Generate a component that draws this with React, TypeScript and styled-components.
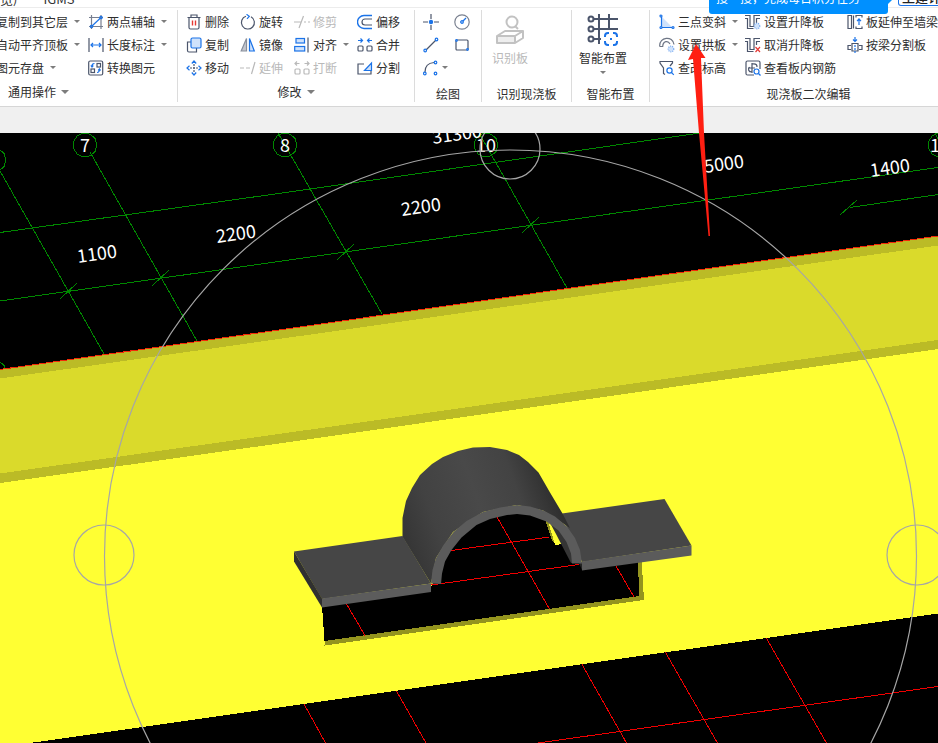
import React from 'react';
import styled, { createGlobalStyle } from 'styled-components';

const INK = '#4b556b';
const BLUE = '#1b73e8';
const MUTED = '#b9b9b9';
const PALE = '#cfe2fb';

const GlobalStyle = createGlobalStyle`
  * { box-sizing: border-box; }
  body {
    margin: 0;
    overflow: hidden;
    color: #2e2e2e;
    font: 12px/16px "Noto Sans CJK SC", sans-serif;
  }
`;

const Page = styled.div`
  position: relative;
  display: flex;
  flex-direction: column;
  height: 100vh;
  overflow: hidden;
  background: #f0f0f0;
`;

const TabStrip = styled.nav`
  display: flex;
  align-items: flex-end;
  gap: 26px;
  height: 8px;
  flex: none;
  overflow: hidden;
  background: #fff;
  border-bottom: 1px solid #ececec;
`;

const Tab = styled.a`
  color: #333;
  font-size: 13px;
  line-height: 16px;
  text-decoration: none;
  white-space: nowrap;
`;

const Ribbon = styled.header`
  display: flex;
  height: 99px;
  flex: none;
  margin-left: -100px;
  background: #fff;
  border-bottom: 1px solid #d6d6d6;
`;

const Group = styled.section<{ $width: number; $fill?: boolean }>`
  display: flex;
  flex-direction: column;
  flex: ${(p) => (p.$fill ? '1 0' : '0 0')} ${(p) => p.$width}px;
  margin: 2px 0 4px;
  border-right: 1px solid #dcdcdc;
`;

const ToolGrid = styled.div<{ $columns: string; $inset: number }>`
  display: grid;
  grid-template-columns: ${(p) => p.$columns};
  grid-auto-rows: 23px;
  flex: none;
  height: 69px;
  padding-left: ${(p) => p.$inset}px;
`;

const ToolStack = styled.div<{ $inset: number }>`
  display: flex;
  align-items: flex-start;
  flex: none;
  height: 69px;
  padding-left: ${(p) => p.$inset}px;
`;

const ToolButton = styled.button<{ $stacked?: boolean }>`
  display: flex;
  flex-direction: ${(p) => (p.$stacked ? 'column' : 'row')};
  align-items: center;
  justify-self: start;
  gap: ${(p) => (p.$stacked ? 2 : 3)}px;
  padding: ${(p) => (p.$stacked ? '3px 0 0' : '0')};
  border: 0;
  background: none;
  color: inherit;
  font: inherit;
  white-space: nowrap;

  &:disabled { color: ${MUTED}; }
  svg { flex: none; display: block; }
`;

const Caret = styled.span<{ $large?: boolean; $spaced?: boolean }>`
  width: 0;
  height: 0;
  margin-left: ${(p) => (p.$spaced ? 3 : 0)}px;
  border: ${(p) => (p.$large ? 4 : 3)}px solid transparent;
  border-top-color: #7d7d7d;
  border-bottom: 0;
`;

const StackedCaret = styled(Caret)`
  margin-top: 3px;
`;

const GroupLabel = styled.div<{ $tall?: boolean }>`
  display: flex;
  align-items: center;
  justify-content: center;
  gap: 5px;
  padding-top: ${(p) => (p.$tall ? 7 : 5)}px;
  line-height: 16px;
  white-space: nowrap;
`;

const Viewport = styled.main`
  flex: 1;
  min-height: 0;
  margin-top: 26px;
  background: #000;
  svg { display: block; width: 100%; height: 100%; }
`;

const Tip = styled.aside`
  position: absolute;
  top: 0;
  left: 709px;
  display: flex;
  align-items: flex-end;
  width: 179px;
  height: 14px;
  padding: 0 7px 8px;
  border-radius: 0 0 3px 3px;
  background: #0090ff;
  color: #fff;
  white-space: nowrap;

  &::after {
    content: '';
    position: absolute;
    left: 100%;
    top: 0;
    border-top: 4px solid #0090ff;
    border-right: 4px solid transparent;
  }
`;

const ProductButton = styled.button`
  position: absolute;
  top: 0;
  left: 898px;
  display: flex;
  align-items: flex-end;
  height: 6px;
  padding: 0 3px;
  border: 1px solid ${BLUE};
  border-top: 0;
  border-radius: 0 0 3px 3px;
  background: #fff;
  color: #222;
  font: inherit;
  font-size: 13px;
  font-weight: 500;
  line-height: 16px;
  overflow: hidden;
  white-space: nowrap;
`;

const Pointer = styled.svg`
  position: absolute;
  top: 44px;
  left: 687px;
  pointer-events: none;
`;

const icons: Record<string, React.ReactNode> = {
  axis: <><path d="M3.500 1v14M13 1v14M1 3.500h14M1 12.500h14" stroke="#777f90" /><path d="M4 12 12.500 4" stroke={BLUE} /><circle cx="3.500" cy="12.500" r="1.200" stroke={BLUE} /><circle cx="13" cy="3.500" r="1.200" stroke={BLUE} /></>,
  length: <><path d="M1 1v14M15 1v14" /><path d="M3 8h10M5 6 3 8l2 2M11 6l2 2-2 2" stroke={BLUE} /></>,
  convert: <><rect x=".7" y="1" width="14" height="14" rx="1.500" /><rect x="9" y="3.500" width="3.500" height="3.500" /><rect x="3" y="9" width="3.500" height="3.500" /><path d="M6.500 3.500C4 3.500 4 5 4 7M2.800 5.500 4 7l1.300-1.500M9 12.500c2.500 0 2.500-1.500 2.500-3.500M10.200 10.500 11.500 9l1.200 1.500" stroke={BLUE} /></>,
  remove: <><path d="M1.500 3.500h13M5 3V1h6v2M3 4v9.500q0 1.500 1.500 1.500h7q1.500 0 1.500-1.500V4" /><path d="M6.500 6.500v5M9.500 6.500v5" stroke="#e53935" strokeWidth="1.400" /></>,
  copy: <><path d="M5 5H1.500v8.500q0 1.500 1.500 1.500h7.500v-4" /><rect x="5" y="1" width="10" height="10" rx="1.500" fill={PALE} stroke={BLUE} /></>,
  move: <><path d="M8 4v8M4 8h8" strokeDasharray="2 1" /><path d="M5.800 3.500 8 1l2.200 2.500M5.800 12.500 8 15l2.200-2.500M3.500 5.800 1 8l2.500 2.200M12.500 5.800 15 8l-2.500 2.200" stroke={BLUE} /></>,
  rotate: <><path d="M6 2.300a6.500 6.500 0 1 0 5 .5" /><path d="M6.500.3 9.300 2.300 7 4.800" stroke={BLUE} /></>,
  mirror: <><path d="M6.500 1.500V14H1.200Z" fill="#c4c7ce" stroke="#888f9c" /><path d="M9.500 1.500V14h4.800Z" fill={PALE} stroke={BLUE} /></>,
  extend: <path d="M0 8h4M6 8h4M15 2l-3.500 12" stroke={MUTED} />,
  trim: <path d="M0 8h7M9.500 2 5 14M10 8h2M14 8h2" stroke={MUTED} />,
  align: <><rect x="2" y="1.500" width="8.500" height="4.500" fill={PALE} stroke={BLUE} /><rect x=".7" y="9.500" width="10" height="4.500" fill={PALE} stroke={BLUE} /><path d="M14 .5v15" /></>,
  break: <g stroke={MUTED}><rect x="1" y="9" width="5" height="5" rx="1" /><rect x="10" y="9" width="5" height="5" rx="1" /><path d="M5.500 3.500H1M3 1.500l-2 2 2 2M10.500 3.500H15M13 1.500l2 2-2 2" /></g>,
  offset: <><path d="M15 1.500H7a6.500 6.500 0 0 0 0 13h8" stroke={BLUE} strokeWidth="1.400" /><path d="M15 5H8a3 3 0 0 0 0 6h7" /></>,
  merge: <><rect x="1" y="9" width="5" height="5" rx="1" /><rect x="10" y="9" width="5" height="5" rx="1" /><path d="M1 3.500h4M3.500 1.500l2 2-2 2M15 3.500h-4M12.500 1.500l-2 2 2 2" stroke={BLUE} /></>,
  split: <><path d="M7 4H1v10h13v-3" /><path d="M7.500 10.500 14.500 3v7.500Z" fill={PALE} stroke={BLUE} /></>,
  point: <><path d="M8 0v5M8 11v5M0 8h5M11 8h5" /><circle cx="8" cy="8" r="2.200" fill={BLUE} stroke="none" /></>,
  circle: <><circle cx="8" cy="8" r="7.200" stroke="#7a8190" /><path d="M8 8 12 4" stroke={BLUE} /><circle cx="8" cy="8" r="1.300" fill={PALE} stroke={BLUE} /></>,
  line: <><path d="m3 13 10-10" /><circle cx="2.200" cy="13.500" r="1.300" stroke={BLUE} /><circle cx="13.500" cy="2.500" r="1.300" stroke={BLUE} /></>,
  rect: <><rect x="2" y="3" width="12" height="10" rx="1" /><circle cx="2.500" cy="3.500" r=".8" stroke={BLUE} fill="#fff" /><circle cx="13.500" cy="12.500" r=".8" stroke={BLUE} fill="#fff" /></>,
  arc: <><path d="M2 12C2 7 5 3 11 2.500" /><g stroke={BLUE}><circle cx="1.800" cy="13.500" r="1.300" /><circle cx="12.500" cy="2.500" r="1.300" /><circle cx="12.500" cy="13.500" r="1.300" /></g></>,
  slope: <><path d="M3 3v10h10Z" fill={PALE} stroke="none" /><path d="M2.500 3v10M3 13.500h10" stroke={BLUE} /><g stroke={BLUE} fill="#fff"><circle cx="2" cy="2" r="1" /><circle cx="2" cy="13.500" r="1" /><circle cx="14" cy="13.500" r="1" /></g></>,
  arch: <><path d="M.7 9.500C0-.5 14-1.500 15 7.500M.7 9.500h3C4 4 9 3 11 7" stroke="#6e7686" /><circle cx="12" cy="12" r="2.800" fill={PALE} stroke="#78aaf0" strokeDasharray="1 1" /></>,
  elevation: <><path d="M6 14.500 4.500 13.500V8L1 3V1.500h12.500V3L11 6" /><circle cx="10.500" cy="10.500" r="2.600" stroke={BLUE} /><path d="m12.500 12.500 2.300 2.300" stroke={BLUE} /></>,
  step: <><path d="M0 1.500h5v11h4v-11h6M0 4.500h2.500v10h6M11.500 9V4.500H15" /><circle cx="12" cy="12" r="2.800" fill={PALE} stroke="#78aaf0" strokeDasharray="1 1" /></>,
  stepOff: <><path d="M0 1.500h5v11h4v-11h6M0 4.500h2.500v10h6M11.500 8V4.500H15" /><path d="m10.500 10 4.500 5M15 10l-4.500 5" stroke="#e53935" /></>,
  rebar: <><path d="M9 15H2.500Q1 15 1 13.500v-11Q1 1 2.500 1h11Q15 1 15 2.500V9M7 3v10M3 8h7M7 4c5-1 5 2 5 3M7 12c-4 0-4-3-2.500-5" /><circle cx="11.500" cy="11.500" r="2.500" stroke={BLUE} fill="#fff" /><path d="m13.500 13.500 2 2" stroke={BLUE} /></>,
  wall: <><path d="M1 1.500h3.500v13H1ZM6.500 1.500v13M9 3.500v-2h6v2M9 12.500v2h6v-2" /><path d="M12 5v6M10 7.200l2-2.200 2 2.200" stroke={BLUE} /></>,
  beam: <><path d="M5 6.500h6v7.500H5ZM4 8.500H1v4h3M12 8.500h3v4h-3" /><path d="M8 8v8" strokeDasharray="2 1" stroke={BLUE} /><path d="M8 0v4M6 2.500l2 2 2-2" stroke={BLUE} /></>,
};

const Icon = ({ name }: { name: string }) => (
  <svg width="16" height="16" viewBox="0 0 16 16" fill="none" stroke={INK} strokeWidth="1.200" aria-hidden="true">
    {icons[name]}
  </svg>
);

type ToolProps = { icon?: string; label?: string; name?: string; menu?: boolean; disabled?: boolean };

const Tool = ({ icon, label, name, menu, disabled }: ToolProps) => (
  <ToolButton disabled={disabled} aria-label={name}>
    {icon && <Icon name={icon} />}
    {label}
    {menu && <Caret $spaced={!!label} />}
  </ToolButton>
);

const green = '#008800';

const AxisBubble = ({ x, y, label }: { x: number; y: number; label?: string }) => (
  <>
    <polygon
      points={[0, 1, 2, 3, 4, 5, 6, 7, 8, 9, 10]
        .map((i) => `${x + 12 * Math.cos((i * Math.PI * 2) / 11)},${y + 12 * Math.sin((i * Math.PI * 2) / 11)}`)
        .join(' ')}
      fill="none"
      stroke={green}
      shapeRendering="crispEdges"
    />
    {label && <text x={x} y={y + 7} textAnchor="middle">{label}</text>}
  </>
);

const dimensions = [
  { x: 78, y: 263, value: '1100' },
  { x: 217, y: 243, value: '2200' },
  { x: 402, y: 216, value: '2200' },
  { x: 433, y: 144, value: '31300' },
  { x: 705, y: 173, value: '5000' },
  { x: 871, y: 177, value: '1400' },
];

const ticks = [[69, 291], [161, 278], [346, 252], [531, 225]];

const Scene = () => (
  <svg viewBox="0 133 938 610" preserveAspectRatio="xMinYMin slice" role="img" aria-label="现浇板三维视图">
    <defs>
      <linearGradient id="barrel" gradientUnits="userSpaceOnUse" x1="408" y1="545" x2="560" y2="490">
        <stop offset="0" stopColor="#363636" />
        <stop offset=".2" stopColor="#424242" />
        <stop offset=".5" stopColor="#494949" />
        <stop offset=".75" stopColor="#434343" />
        <stop offset="1" stopColor="#2b2b2b" />
      </linearGradient>
    </defs>
    <rect y="133" width="938" height="610" fill="#000" />

    <g stroke={green} fill="none" shapeRendering="crispEdges">
      <path d="M0 232.500 300 190.500 700 133M0 301 300 258.500 620 212.500 938 167.500" />
      <path d="M0 171 104 354M90 152 197 341M278 133 382 314M479 133 567 288M850 207.500 938 194.500M840 215 857 200M935 133l6 12" />
      {ticks.map(([x, y]) => <path key={x} d={`M${x - 9} ${y + 8} ${x + 8} ${y - 8}`} />)}
    </g>
    <g fill="#fff" fontFamily='"Noto Sans CJK SC", sans-serif' fontSize="18">
      <AxisBubble x={-6} y={160} />
      <AxisBubble x={-6} y={372} />
      <AxisBubble x={85} y={145} label="7" />
      <AxisBubble x={285} y={145} label="8" />
      <AxisBubble x={486} y={145} label="10" />
      <AxisBubble x={940} y={145} label="11" />
      {dimensions.map((d) => (
        <text key={d.x} x={d.x} y={d.y} transform={`rotate(-8 ${d.x} ${d.y})`}>{d.value}</text>
      ))}
    </g>

    <g shapeRendering="crispEdges">
      <path d="M0 369.500 300 327 620 281 938 236V743H0Z" fill="#bbbb26" />
      <path d="M0 378.500 300 336 620 290.500 938 245.500V340L300 431 0 473.500Z" fill="#dada2b" />
      <path d="M0 483 300 440.500 938 349V613.500L30 743H0Z" fill="#ffff33" />
      <path d="M30 743 938 613.500V743Z" fill="#000" />
      <path d="M0 743V483L1 743Z" fill="#ffff33" />
      <path d="M0 369.500 300 327 620 281 938 236" fill="none" stroke="#f32a08" />
      <path d="M304 704 325.500 743M396.500 691 426 743M582 664.500 626.500 743M665.500 652.500 717.500 743M766.500 638.500 826.500 743M538 743 938 686.500" stroke="#f00000" />

      <path d="M637.500 558H641.500L644 600 324.500 645.500V640L639 595Z" fill="#94941e" />
      <path d="M322 606 430 590 434 580 444 555 458 536 474 523 490 515 507 511 517 510 530 511 546 517 562 530 576 560 582 565 637.500 558 639.500 596 324.500 641Z" fill="#000" />
      <path d="M497 517 549.500 609M451 550.500 549.500 537M431 585 579 564.500M616 566 634 597M346.500 604 365 635.500" stroke="#f00000" />
      <path d="M545 519 549 523 556 544 552 541Z" fill="#94941e" />
      <path d="M548 521 558 530 562 544 555 545Z" fill="#ffff33" />
    </g>
    <path d="M549 521 556 534 571 563 573 563 572 545 560 526Z" fill="#353535" />

    <path d="M562 513.500 664.500 499 691.500 545.500 582 562 566 525Z" fill="#464646" />
    <path d="M582 561.500 691.500 545.500V555.500L582 570.500Z" fill="#5b5b5b" />
    <path d="M579 563 582 562V570Z" fill="#242424" />
    <path d="M402.500 537V518L406 501 412 488 420 475 432 464 443 457 458 451 473 447.500 490 447 507 450 519 455 528 462 538.500 472.500 550 492.500 562.500 513.500 570 528 543 510.500 517 505 483 512 453 532 436 558 431 583.500Z" fill="url(#barrel)" />
    <path d="M431 583.500 432.500 570 436 558 443.500 545 453.500 532 466.500 521 483 512 500 507.500 517 505 530 506.500 543.500 510.500 555 516.500 567 526.500 575 538 580 550 582 563.500H572L571 553.500 566.500 542 558.500 530.500 546.500 521.500 530 515.500 517 514 507 515 490 519 476.500 525 461.500 537.500 451.500 550 445 561.500 442 573.500 441 584Z" fill="#5b5b5b" />
    <path d="M294 551.500 402.500 536 431 583.500 322 599Z" fill="#464646" />
    <path d="M322 598.500 431 583.500V592L322 607.500Z" fill="#5c5c5c" />
    <path d="M294 551.500 322 598.500V607.500L294 561.500Z" fill="#303030" />

    <g fill="none" stroke="#a6a6a6" strokeWidth="1.200">
      <circle cx="510.500" cy="556" r="406" />
      <circle cx="510" cy="149" r="30" />
      <circle cx="104" cy="555" r="30" />
      <circle cx="917" cy="555" r="30" />
    </g>
  </svg>
);

export default function App() {
  return (
    <>
      <GlobalStyle />
      <Page>
        <TabStrip>
          <Tab href="#view">览)</Tab>
          <Tab href="#igms">IGMS</Tab>
        </TabStrip>
        <Ribbon>
          <Group $width={278}>
            <ToolGrid $columns="92px auto" $inset={96}>
              <Tool label="复制到其它层" menu />
              <Tool icon="axis" label="两点辅轴" menu />
              <Tool label="自动平齐顶板" menu />
              <Tool icon="length" label="长度标注" menu />
              <Tool label="图元存盘" menu />
              <Tool icon="convert" label="转换图元" />
            </ToolGrid>
            <GroupLabel>通用操作<Caret $large /></GroupLabel>
          </Group>
          <Group $width={237}>
            <ToolGrid $columns="54px 54px 63px auto" $inset={8}>
              <Tool icon="remove" label="删除" />
              <Tool icon="rotate" label="旋转" />
              <Tool icon="trim" label="修剪" disabled />
              <Tool icon="offset" label="偏移" />
              <Tool icon="copy" label="复制" />
              <Tool icon="mirror" label="镜像" />
              <Tool icon="align" label="对齐" menu />
              <Tool icon="merge" label="合并" />
              <Tool icon="move" label="移动" />
              <Tool icon="extend" label="延伸" disabled />
              <Tool icon="break" label="打断" disabled />
              <Tool icon="split" label="分割" />
            </ToolGrid>
            <GroupLabel>修改<Caret $large /></GroupLabel>
          </Group>
          <Group $width={67}>
            <ToolGrid $columns="31px auto" $inset={8}>
              <Tool icon="point" name="点" />
              <Tool icon="circle" name="圆" />
              <Tool icon="line" name="直线" />
              <Tool icon="rect" name="矩形" />
              <Tool icon="arc" name="弧线" menu />
            </ToolGrid>
            <GroupLabel $tall>绘图</GroupLabel>
          </Group>
          <Group $width={90}>
            <ToolStack $inset={10}>
              <ToolButton $stacked disabled>
                <svg width="32" height="35" viewBox="0 0 32 35" fill="none" stroke="#c2c2c2" strokeWidth="2">
                  <circle cx="18" cy="9" r="5.500" />
                  <path d="m21 13 3 3" />
                  <path d="M3 24h18v6H3Z" fill="#eee" stroke="none" />
                  <path d="M3 23 11 18H29L21 23ZM3 23v7H21V23M21 30 29 25V18" strokeLinejoin="round" />
                </svg>
                识别板
              </ToolButton>
            </ToolStack>
            <GroupLabel $tall>识别现浇板</GroupLabel>
          </Group>
          <Group $width={78}>
            <ToolStack $inset={7}>
              <ToolButton $stacked>
                <svg width="32" height="35" viewBox="0 0 32 35" fill="none" stroke={INK} strokeWidth="2">
                  <path d="M5 6h26M5 16h26M5 26h9M12 1v30M22 1v14" />
                  <g fill="#fff"><circle cx="4" cy="6" r="2.500" /><circle cx="4" cy="16" r="2.500" /><circle cx="4" cy="26" r="2.500" /></g>
                  <rect x="16" y="18" width="15" height="15" fill="#fff" stroke="none" />
                  <path d="M18 24v-1q0-3 3-3h1M26 20h1q3 0 3 3v1M30 28v1q0 3-3 3h-1M22 32h-1q-3 0-3-3v-1" stroke={BLUE} />
                  <path d="M23 26h2" stroke={BLUE} />
                </svg>
                智能布置
                <StackedCaret />
              </ToolButton>
            </ToolStack>
            <GroupLabel $tall>智能布置</GroupLabel>
          </Group>
          <Group $width={318} $fill>
            <ToolGrid $columns="86px 102px auto" $inset={9}>
              <Tool icon="slope" label="三点变斜" menu />
              <Tool icon="step" label="设置升降板" />
              <Tool icon="wall" label="板延伸至墙梁边" />
              <Tool icon="arch" label="设置拱板" menu />
              <Tool icon="stepOff" label="取消升降板" />
              <Tool icon="beam" label="按梁分割板" />
              <Tool icon="elevation" label="查改标高" />
              <Tool icon="rebar" label="查看板内钢筋" />
            </ToolGrid>
            <GroupLabel $tall>现浇板二次编辑</GroupLabel>
          </Group>
        </Ribbon>
        <Viewport><Scene /></Viewport>
        <Tip>搜一搜，完成每日积分任务</Tip>
        <ProductButton>土建计量</ProductButton>
        <Pointer width="26" height="194" viewBox="687 44 26 194" aria-hidden="true">
          <path d="M696 44 688 60 693 59 699 133 708.500 236H710L704 133 701 58 705.500 58Z" fill="#ff1f12" />
        </Pointer>
      </Page>
    </>
  );
}
